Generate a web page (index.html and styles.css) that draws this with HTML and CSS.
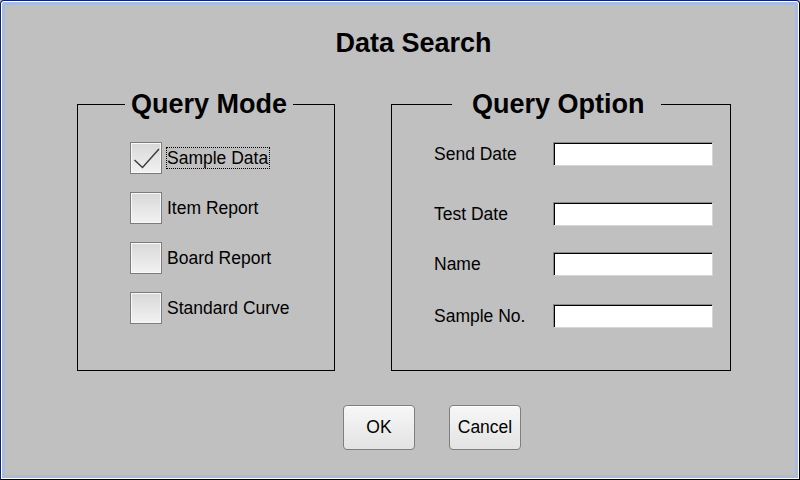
FILE: index.html
```html
<!DOCTYPE html>
<html lang="en">
<head>
    <meta charset="UTF-8">
    <title>Data Search</title>
    <link rel="stylesheet" href="styles.css">
</head>
<body>
    <!-- Dialog window -->
    <div class="window">
        <h1 class="title">Data Search</h1>

        <div class="panels">
            <!-- Left group: what kind of data to search -->
            <fieldset class="group mode">
                <legend>Query Mode</legend>
                <div class="checks">
                    <label class="check">
                        <span class="box">
                            <svg width="30" height="30" viewBox="0 0 30 30">
                                <polyline points="3.5,17 11.5,24.5 28,6" fill="none" stroke="#3a3a3a" stroke-width="1.4"/>
                            </svg>
                        </span>
                        <span class="text focused">Sample Data</span>
                    </label>
                    <label class="check">
                        <span class="box"></span>
                        <span class="text">Item Report</span>
                    </label>
                    <label class="check">
                        <span class="box"></span>
                        <span class="text">Board Report</span>
                    </label>
                    <label class="check">
                        <span class="box"></span>
                        <span class="text">Standard Curve</span>
                    </label>
                </div>
            </fieldset>

            <!-- Right group: filter fields -->
            <fieldset class="group option">
                <legend>Query Option</legend>
                <div class="fields">
                    <div class="field first">
                        <label for="send-date">Send Date</label>
                        <input type="text" id="send-date">
                    </div>
                    <div class="field">
                        <label for="test-date">Test Date</label>
                        <input type="text" id="test-date">
                    </div>
                    <div class="field">
                        <label for="name">Name</label>
                        <input type="text" id="name">
                    </div>
                    <div class="field last">
                        <label for="sample-no">Sample No.</label>
                        <input type="text" id="sample-no">
                    </div>
                </div>
            </fieldset>
        </div>

        <!-- Dialog buttons -->
        <div class="actions">
            <button type="button">OK</button>
            <button type="button">Cancel</button>
        </div>
    </div>
</body>
</html>
```

FILE: styles.css
```css
html, body {
    margin: 0;
    padding: 0;
}
body {
    font-family: "Liberation Sans", Arial, sans-serif;
    font-size: 17.5px;
    color: #000;
    background: #c0c0c0;
}
.window {
    width: 800px;
    height: 480px;
    box-sizing: border-box;
    background: #c0c0c0;
    border: 1px solid;
    border-color: #10207a #000 #000 #10207a;
    border-radius: 4px 4px 0 0;
    box-shadow: inset 0 0 0 1px #fff, inset 0 0 0 4px #a6bedc;
    overflow: hidden;
}
.title {
    margin: 29px 0 0;
    padding-left: 27px;
    font-size: 27px;
    line-height: 27px;
    font-weight: bold;
    text-align: center;
}
.panels {
    display: flex;
    gap: 56px;
    margin-top: 34px;
    padding-left: 76px;
}
.group {
    box-sizing: border-box;
    height: 280px;
    margin: 0;
    border: 1px solid #000;
    padding: 0;
}
.group legend {
    font-size: 27px;
    line-height: 27px;
    font-weight: bold;
    white-space: nowrap;
}
.mode {
    width: 258px;
}
.mode legend {
    margin-left: 47px;
    padding: 0 6px;
}
.option {
    width: 340px;
}
.option legend {
    margin-left: 60px;
    padding: 0 16px 0 20px;
}
.checks {
    display: flex;
    flex-direction: column;
    gap: 18px;
    padding: 24px 0 0 52px;
}
.check {
    display: flex;
    align-items: center;
    gap: 4px;
}
.box {
    width: 32px;
    height: 32px;
    box-sizing: border-box;
    border: 1px solid #7c7c7c;
    box-shadow: inset 0 0 0 1px #f8f8f8;
    background: linear-gradient(#d8d8d8, #f2f2f2);
}
.box svg {
    display: block;
}
.text {
    line-height: 20px;
    border: 1px dotted transparent;
    padding: 0 1px 0 0;
}
.text.focused {
    border-color: #000;
}
.fields {
    display: flex;
    flex-direction: column;
    gap: 26px;
    padding: 24px 0 0 42px;
}
.field {
    display: flex;
    align-items: center;
}
.field.first {
    margin-bottom: 10px;
}
.field.last {
    margin-top: 2px;
}
.field label {
    width: 119px;
}
.field input {
    width: 160px;
    height: 24px;
    box-sizing: border-box;
    margin: 0;
    padding: 0 3px;
    font: inherit;
    background: #fff;
    border: 1px solid;
    border-color: #8a8a8a #d6d6d6 #d6d6d6 #8a8a8a;
    box-shadow: inset 1px 1px 0 #000;
    outline: none;
}
.actions {
    display: flex;
    gap: 34px;
    margin-top: 34px;
    padding-left: 342px;
}
.actions button {
    width: 72px;
    height: 45px;
    padding: 0;
    font-family: inherit;
    font-size: 17.5px;
    color: #000;
    border: 1px solid #7f7f7f;
    border-radius: 4px;
    background: linear-gradient(#f7f7f7, #e3e3e3);
    box-shadow: inset 0 1px 0 #fff;
}
```
